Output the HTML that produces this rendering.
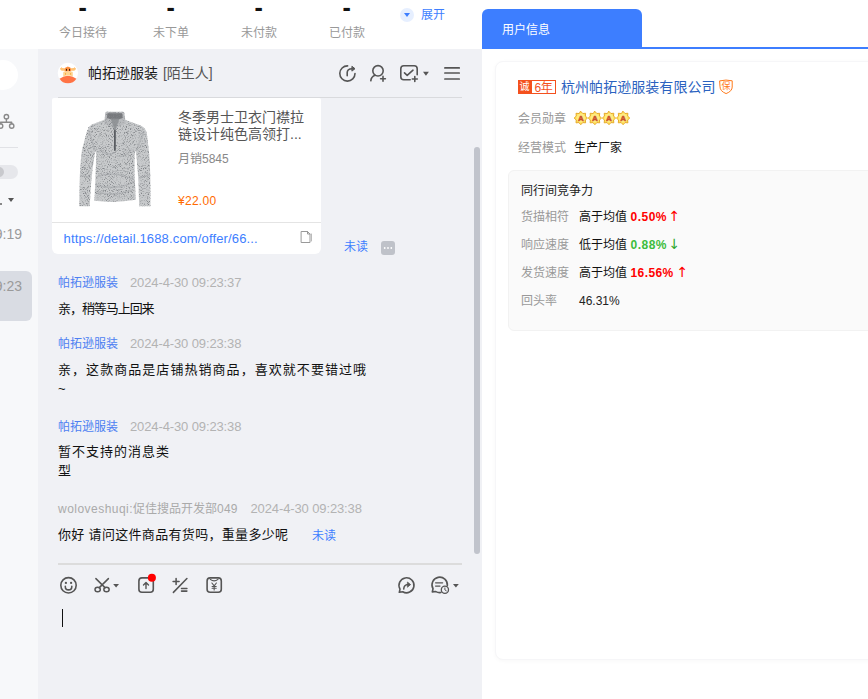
<!DOCTYPE html>
<html lang="zh-CN">
<head>
<meta charset="utf-8">
<title>聊天</title>
<style>
*{box-sizing:border-box;margin:0;padding:0}
html,body{width:868px;height:699px;overflow:hidden;background:#fff}
body{position:relative;font-family:"Liberation Sans","Noto Sans CJK SC",sans-serif;font-size:12px;color:#333}
.abs{position:absolute}
.t{position:absolute;white-space:nowrap;line-height:1}
#topbar{left:0;top:0;width:482px;height:49px;background:#fff}
#sidebar{left:0;top:49px;width:38px;height:650px;background:#f7f8fa}
#chat{left:38px;top:49px;width:444px;height:650px;background:#f0f1f5}
#right{left:482px;top:0;width:386px;height:699px;background:#fff}
.dsh{font-size:25px;font-weight:bold;color:#111;top:-5.300px;margin-left:.6px}
.lbl{color:#999;font-size:12px;top:27px}
.g{color:#999}
.name{color:#4d7ff2;font-size:12px}
.time{color:#b3b3b3;font-size:13px;letter-spacing:-.12px;margin-top:-1.500px}
.msg{color:#111;font-size:13px}
.blue{color:#3d7eff}
svg{position:absolute;overflow:visible}
</style>
</head>
<body>
<!-- backgrounds -->
<div id="topbar" class="abs"></div>
<div id="sidebar" class="abs"></div>
<div id="chat" class="abs"></div>
<div id="right" class="abs"></div>

<!-- top stats -->
<div class="t dsh" style="left:78px">-</div>
<div class="t dsh" style="left:166px">-</div>
<div class="t dsh" style="left:254px">-</div>
<div class="t dsh" style="left:342px">-</div>
<div class="t lbl" style="left:59px">今日接待</div>
<div class="t lbl" style="left:153px">未下单</div>
<div class="t lbl" style="left:241px">未付款</div>
<div class="t lbl" style="left:329px">已付款</div>
<div class="abs" style="left:400px;top:8px;width:14px;height:14px;border-radius:7px;background:#e6efff"></div>
<div class="abs" style="left:404px;top:13px;width:0;height:0;border-left:3px solid transparent;border-right:3px solid transparent;border-top:4px solid #3d7eff"></div>
<div class="t blue" style="left:421px;top:9px;font-size:12px">展开</div>

<!-- sidebar bits -->
<div class="abs" style="left:-12px;top:60px;width:30px;height:30px;border-radius:15px;background:#fff"></div>
<div class="abs" style="left:0;top:147px;width:18px;height:1px;background:#e1e2e6"></div>
<div class="abs" style="left:-10px;top:165px;width:28px;height:14px;border-radius:7px;background:#e6e7eb"></div>
<div class="abs" style="left:-6px;top:167px;width:10px;height:10px;border-radius:5px;background:#c8c9cd"></div>
<div class="abs" style="left:8px;top:198px;width:0;height:0;border-left:3px solid transparent;border-right:3px solid transparent;border-top:4px solid #555"></div>
<div class="t" style="right:846px;top:227px;font-size:14px;color:#9a9a9a">09:19</div>
<div class="abs" style="left:-10px;top:271px;width:42px;height:50px;border-radius:6px;background:#d9dce3"></div>
<div class="t" style="right:846px;top:279px;font-size:14px;color:#9a9a9a">09:23</div>

<div class="abs" style="left:0;top:203px;width:2px;height:2px;background:#888"></div>

<!-- chat header -->
<div class="t" style="left:88px;top:66px;font-size:14px;color:#1a1a1a">帕拓逊服装 <span style="color:#555;margin-left:1px">[陌生人]</span></div>
<div class="abs" style="left:58px;top:97px;width:404px;height:1px;background:#d9dadd"></div>

<!-- product card -->
<div class="abs" style="left:52px;top:98px;width:269px;height:156px;border-radius:2px 2px 6px 6px;background:#fff"></div>
<div class="abs" style="left:52px;top:222px;width:269px;height:1px;background:#e4e4e4"></div>
<div class="t" style="left:178px;top:110px;font-size:14px;color:#555">冬季男士卫衣门襟拉</div>
<div class="t" style="left:178px;top:127px;font-size:14px;color:#555">链设计纯色高领打...</div>
<div class="t" style="left:178px;top:153px;font-size:12px;color:#888">月销5845</div>
<div class="t" style="left:178px;top:195px;font-size:12px;letter-spacing:.27px;color:#ff6a00">¥22.00</div>
<div class="t blue" style="left:63.500px;top:231.500px;font-size:13px;letter-spacing:.15px">https://detail.1688.com/offer/66...</div>
<div class="t blue" style="left:344px;top:240.500px;font-size:12px">未读</div>

<!-- messages -->
<div class="t name" style="left:58px;top:277px">帕拓逊服装</div>
<div class="t time" style="left:130px;top:277px">2024-4-30 09:23:37</div>
<div class="t msg" style="left:58px;top:302px;letter-spacing:-1.060px">亲，稍等马上回来</div>

<div class="t name" style="left:58px;top:338px">帕拓逊服装</div>
<div class="t time" style="left:130px;top:338px">2024-4-30 09:23:38</div>
<div class="t msg" style="left:58px;top:363px;letter-spacing:1.050px">亲，这款商品是店铺热销商品，喜欢就不要错过哦</div>
<div class="t msg" style="left:58px;top:382px">~</div>

<div class="t name" style="left:58px;top:421px">帕拓逊服装</div>
<div class="t time" style="left:130px;top:421px">2024-4-30 09:23:38</div>
<div class="t msg" style="left:58px;top:445px;letter-spacing:1px">暂不支持的消息类</div>
<div class="t msg" style="left:58px;top:464px">型</div>

<div class="t" style="left:58px;top:503px;font-size:12px;color:#aaa"><span style="letter-spacing:.47px">woloveshuqi:</span>促佳搜品开发部<span style="letter-spacing:.23px">049</span></div>
<div class="t time" style="left:250.500px;top:503px">2024-4-30 09:23:38</div>
<div class="t msg" style="left:58px;top:528px;letter-spacing:.32px">你好 请问这件商品有货吗，重量多少呢</div>
<div class="t blue" style="left:312px;top:529.500px;font-size:12px">未读</div>

<!-- scrollbar -->
<div class="abs" style="left:474px;top:147px;width:6px;height:407px;border-radius:3px;background:#c1c4cc"></div>

<!-- input area -->
<div class="abs" style="left:58px;top:563px;width:404px;height:2px;background:#dcdcdc"></div>
<div class="abs" style="left:62px;top:609px;width:1px;height:18px;background:#111"></div>

<!-- right panel -->
<div class="abs" style="left:482px;top:9px;width:160px;height:40px;border-radius:6px 6px 0 0;background:#3d7eff"></div>
<div class="abs" style="left:642px;top:47px;width:226px;height:2px;background:#3d7eff"></div>
<div class="t" style="left:502px;top:24px;font-size:12px;color:#fff">用户信息</div>

<div class="abs" style="left:495px;top:61px;width:390px;height:599px;border-radius:8px;border:1px solid #f6f6f8;background:#fff;box-shadow:0 1px 4px rgba(0,0,0,.03)"></div>

<div class="t" style="left:561px;top:79.500px;font-size:14px;letter-spacing:.05px;color:#2b62c0">杭州帕拓逊服装有限公司</div>
<div class="abs" style="left:518px;top:80px;width:38px;height:14px;background:#f4511e"></div><div class="abs" style="left:531.500px;top:81px;width:23.500px;height:12px;background:#fff"></div>
<div class="t" style="left:519.500px;top:82px;font-size:10px;color:#fff">诚</div><div class="t" style="left:534.500px;top:81.500px;font-size:12px;letter-spacing:-.3px;color:#f4511e">6年</div><div class="t" style="left:721.500px;top:82px;font-size:9px;color:#ff7a1a">保</div>
<div class="t g" style="left:518px;top:113px">会员勋章</div>
<div class="t g" style="left:518px;top:142px">经营模式</div>
<div class="t" style="left:574px;top:142px;color:#111">生产厂家</div>

<div class="abs" style="left:508px;top:170px;width:380px;height:161px;border-radius:6px;border:1px solid #f2f2f2;background:#fafafa"></div>
<div class="t" style="left:521px;top:185px;color:#222">同行间竞争力</div>
<div class="t g" style="left:521px;top:211px">货描相符</div>
<div class="t" style="left:579px;top:211px;color:#111">高于均值</div><div class="t" style="left:630.500px;top:211px;font-weight:bold;letter-spacing:0.5px;color:#f00">0.50%</div><div class="t" style="left:668.500px;top:209px;font-family:'DejaVu Sans',sans-serif;font-size:14px;font-weight:normal;color:#f00">↑</div>
<div class="t g" style="left:521px;top:238.5px">响应速度</div>
<div class="t" style="left:579px;top:238.5px;color:#111">低于均值</div><div class="t" style="left:630.500px;top:238.5px;font-weight:bold;letter-spacing:0.5px;color:#3dbd3d">0.88%</div><div class="t" style="left:668.500px;top:236.500px;font-family:'DejaVu Sans',sans-serif;font-size:14px;font-weight:normal;color:#2fa82f">↓</div>
<div class="t g" style="left:521px;top:267px">发货速度</div>
<div class="t" style="left:579px;top:267px;color:#111">高于均值</div><div class="t" style="left:630.500px;top:267px;font-weight:bold;letter-spacing:0.4px;color:#f00">16.56%</div><div class="t" style="left:676.500px;top:265px;font-family:'DejaVu Sans',sans-serif;font-size:14px;font-weight:normal;color:#f00">↑</div>
<div class="t g" style="left:521px;top:294.500px">回头率</div>
<div class="t" style="left:579px;top:294.500px;color:#222">46.31%</div>

<!-- icon overlay (page coordinates) -->
<svg width="868" height="699" viewBox="0 0 868 699" style="left:0;top:0" fill="none" stroke="#555" stroke-width="1.6" stroke-linecap="round" stroke-linejoin="round">
<defs>
<filter id="knit" x="0" y="0" width="100%" height="100%">
<feTurbulence type="fractalNoise" baseFrequency="0.95" numOctaves="2" seed="7" result="n"/>
<feColorMatrix in="n" type="matrix" values="0 0 0 0 0  0 0 0 0 0  0 0 0 0 0  3.5 0 0 0 -1.7" result="a0"/><feGaussianBlur in="a0" stdDeviation=".35" result="a"/>
<feFlood flood-color="#808387" result="c"/>
<feComposite in="c" in2="a" operator="in" result="sp"/>
<feComposite in="sp" in2="SourceGraphic" operator="in" result="sp2"/>
<feMerge><feMergeNode in="SourceGraphic"/><feMergeNode in="sp2"/></feMerge>
</filter>
<filter id="soft"><feGaussianBlur stdDeviation="0.5"/></filter>
</defs>

<!-- avatar -->
<g stroke="none">
<circle cx="67.900" cy="73" r="10.200" fill="#fff"/>
<path d="M59.600 78.700Q67.900 72.600 76.400 78.700Q73.500 83.200 67.900 83.200T59.600 78.700z" fill="#ff7345"/>
<path d="M60 68.200l.9-.3 .5-1 .7 1.100 3 .2v2.600l-3.200-.1q-1.700-.5-1.900-2.500z" fill="#ffc274"/>
<path d="M76 68.200l-.9-.3-.5-1-.7 1.100-3 .2v2.600l3.200-.1q1.700-.5 1.900-2.500z" fill="#ffc274"/>
<path d="M64.800 71.600v-2.600q.3-2 2.200-2.100l.9-.5 .9 .5q1.900 .1 2.200 2.100v2.600z" fill="#ff8f3f"/>
<path d="M63.200 72.600q0-1.200 1.600-1.200h6.400q1.600 0 1.600 1.200v3.800q-4.800-1.600-9.600 0z" fill="#ffd491"/>
<rect x="66" y="68.700" width="1" height="2.100" rx=".5" fill="#1c1008"/>
<rect x="69" y="68.700" width="1" height="2.100" rx=".5" fill="#1c1008"/>
<rect x="65" y="72.900" width=".9" height="1.900" rx=".4" fill="#f7a531"/>
<rect x="70.200" y="72.900" width=".9" height="1.900" rx=".4" fill="#f7a531"/>
</g>

<!-- sidebar tree icon -->
<g stroke="#8a8a8a" stroke-width="1.400">
<circle cx="6.400" cy="116.700" r="2.200"/><circle cx="11.700" cy="126" r="2.200"/><circle cx=".6" cy="126" r="2.200"/>
<path d="M6.400 119v3.200M.6 123.700v-1.500h11.100v1.500"/>
</g>

<!-- header icons -->
<path d="M347.600 65.900A7.600 7.600 0 1 0 355 73.500"/>
<path d="M347.200 75.800V72.600Q347.200 68.800 352.200 68.700"/>
<path d="M352.200 66.500L355 68.700 352.200 70.900z" fill="#555" stroke-width="1"/>
<circle cx="378" cy="70.800" r="5.200"/>
<path d="M370.800 80.800Q371.200 76.800 375 75.300"/>
<path d="M383 76.400v4.800M380.600 78.800h4.800"/>
<path d="M410.200 79.800H403.800Q400.800 79.800 400.800 76.800V68.800Q400.800 65.800 403.800 65.800H414.200Q417.200 65.800 417.200 68.800V74.800"/>
<path d="M404.500 72.800L407.200 75.300 413 70.200"/>
<path d="M414.800 76.500v5M412.300 79h5"/>
<path d="M423 71.800h5.900l-2.950 3.900z" fill="#555" stroke="none"/>
<path d="M444.900 67.900h14.300M444.900 73h14.300M444.900 79h14.300" stroke-width="1.700"/>

<!-- copy icon -->
<g stroke="#999" stroke-width="1">
<path d="M301.500 231.500h6l2.500 2.500v8.500h-8.500z"/><path d="M307.500 231.500v2.500h2.500"/><path d="M311.500 234v7" stroke="#bbb"/>
</g>
<!-- more box -->
<rect x="381" y="241" width="14" height="14" rx="3" fill="#bfc2c9" stroke="none"/>
<g fill="#fff" stroke="none"><circle cx="384.700" cy="248" r=".9"/><circle cx="388" cy="248" r=".9"/><circle cx="391.300" cy="248" r=".9"/></g>

<!-- toolbar icons -->
<circle cx="68.500" cy="585.300" r="7.700"/>
<g fill="#555" stroke="none"><circle cx="65.900" cy="582.900" r="1.150"/><circle cx="71.100" cy="582.900" r="1.150"/></g>
<path d="M65.300 586.400q0 3.500 3.250 3.500t3.250-3.500"/>
<g stroke-width="1.500">
<path d="M95.900 578.600L105 587.600M108.400 578.600L99.300 587.600"/>
<ellipse cx="97.650" cy="589.550" rx="2.650" ry="2.300"/><ellipse cx="106.500" cy="589.550" rx="2.650" ry="2.300"/>
</g>
<path d="M113.200 584h5.800l-2.900 3.500z" fill="#555" stroke="none"/>
<rect x="138.900" y="577.900" width="14.400" height="14.400" rx="3"/>
<path d="M146 588.600v-5.800M143.500 585.100l2.500-2.500 2.500 2.500" stroke-width="1.400"/>
<circle cx="151.900" cy="577.800" r="4" fill="#f00" stroke="none"/>
<g stroke-width="1.550">
<path d="M173.400 592.400L186.900 578.500"/><path d="M176.100 578.500v6M173.100 581.500h6"/><path d="M181.500 588.400h5.400M181.500 591.100h5.400"/>
</g>
<rect x="207.100" y="577.900" width="14.200" height="14.400" rx="3"/>
<g stroke-width="1.100">
<path d="M210.300 579.300q3.850 3.200 7.700 0"/>
<path d="M211.900 583l2.250 2.800 2.250-2.800M214.150 585.800v4.100M212.100 586.500h4.100M212.100 588.300h4.100"/>
</g>
<path d="M400 589.050A7.500 7.500 0 1 1 402.750 591.800L399.300 592.300z"/>
<path d="M403.700 589.100q.3-4.300 4.200-4.500" stroke-width="1.500"/>
<path d="M407.700 582.300l2.900 2.300-2.900 2.400z" fill="#555" stroke-width=".8"/>
<path d="M440.930 592.500A7.700 7.700 0 0 1 435.850 591.570L432.300 591.900 433.030 588.750A7.700 7.700 0 1 1 447.360 585.680"/>
<path d="M435.600 582.800h7M435.600 586.100h4.400" stroke-width="1.300"/>
<circle cx="444.900" cy="589.800" r="3.600" fill="#f0f1f5" stroke-width="1.300"/>
<path d="M444.900 587.900v2l1.400 .9" stroke-width="1"/>
<path d="M453 584h5.800l-2.900 3.600z" fill="#555" stroke="none"/>

<!-- right: badge, shield, medals -->
<g stroke="none">
<path d="M720 80.800q6 -1.500 12.200 0v6.200q0 4.200-6.100 6.600q-6.100-2.400-6.100-6.600z" fill="none" stroke="#ff7a1a" stroke-width="1"/>
</g>
<g stroke="#e3a21f" stroke-width=".9" fill="#ffe35c" transform="translate(0 .4)">
<path d="M580.800 111l1.950 2.100 2.850-.25-.25 2.850 2.100 1.950-2.100 1.950 .25 2.850-2.850-.25-1.950 2.100-1.950-2.100-2.850 .25 .25-2.850-2.100-1.950 2.100-1.950-.25-2.850 2.850 .25z"/>
</g>
<path transform="translate(14.1 .4)" d="M580.800 111l1.950 2.100 2.850-.25-.25 2.850 2.100 1.950-2.100 1.950 .25 2.850-2.850-.25-1.950 2.100-1.950-2.100-2.850 .25 .25-2.850-2.100-1.950 2.100-1.950-.25-2.850 2.850 .25z" stroke="#e3a21f" stroke-width=".9" fill="#ffe35c"/><path transform="translate(28.2 .4)" d="M580.800 111l1.950 2.100 2.850-.25-.25 2.850 2.100 1.950-2.100 1.950 .25 2.850-2.850-.25-1.950 2.100-1.950-2.100-2.850 .25 .25-2.850-2.100-1.950 2.100-1.950-.25-2.850 2.850 .25z" stroke="#e3a21f" stroke-width=".9" fill="#ffe35c"/><path transform="translate(42.3 .4)" d="M580.800 111l1.950 2.100 2.850-.25-.25 2.850 2.100 1.950-2.100 1.950 .25 2.850-2.850-.25-1.950 2.100-1.950-2.100-2.850 .25 .25-2.850-2.100-1.950 2.100-1.950-.25-2.850 2.850 .25z" stroke="#e3a21f" stroke-width=".9" fill="#ffe35c"/>
<g stroke="none" fill="#fff3a8"><circle cx="580.800" cy="117.900" r="4.300" opacity=".5"/><circle cx="594.900" cy="117.900" r="4.300" opacity=".5"/><circle cx="609" cy="117.900" r="4.300" opacity=".5"/><circle cx="623.100" cy="117.900" r="4.300" opacity=".5"/></g>
<g stroke="#c9502c" stroke-width=".5" fill="#c9502c" font-family="'Liberation Sans',sans-serif" font-weight="bold" font-size="8" text-anchor="middle" transform="translate(0 .3)">
<text x="580.800" y="121">A</text><text x="594.900" y="121">A</text><text x="609" y="121">A</text><text x="623.100" y="121">A</text>
</g>

<!-- sweater -->
<g stroke="none" filter="url(#knit)">
<path d="M104.800 119.500L92 124.500Q89 126 88 128L96.200 154 95.600 175 94.400 200.800Q115 203.500 135.800 199.800L134.600 175 134.600 154 144 128Q142 125.800 139 125L124.400 119.500z" fill="#c8cacc"/>
<path d="M94 124.200Q88.500 126.500 86.700 132L82 150Q79.300 168 79.300 206.300L89.800 206.300Q90.500 180 94.600 155L97 128z" fill="#c8cacc"/>
<path d="M138 124.600Q145.500 127 146.800 133L148.800 150Q150.800 168 150.400 206.300L139.200 206.300Q139 180 136.400 155L134 128z" fill="#c8cacc"/>
<path d="M105.200 113.200Q105 111.500 107 111.700L122.500 111.700Q124.600 111.500 124.400 113.500L125.800 123.500 117 127.500 114.800 131 112 127 104.200 124z" fill="#b9bbbe"/>
<path d="M107.500 113.300h14.500l.8 4.700q-8 3-16 0z" fill="#77797d"/>
</g>
<g stroke="none">
<path d="M110.500 118.500L119.500 118.500 115.400 130 114.600 130z" fill="#8b8e92" opacity=".85"/>
<rect x="114" y="129.500" width="1.800" height="21.500" rx=".9" fill="#5a5d62"/>
<g filter="url(#soft)" fill="none" stroke="#9a9da1" stroke-width="1.600" opacity=".4">
<path d="M97 177q14-7 36 2M97 185q18 6 37-3M98 192q16 5 34-2M81 176l9 1M140 178l9-3M89 131q3 10 6 19M143.500 132q-4 10-7 18M100 150q8 6 14 3M131 150q-6 8-14 6"/>
</g>
</g>
</svg>
</body>
</html>
